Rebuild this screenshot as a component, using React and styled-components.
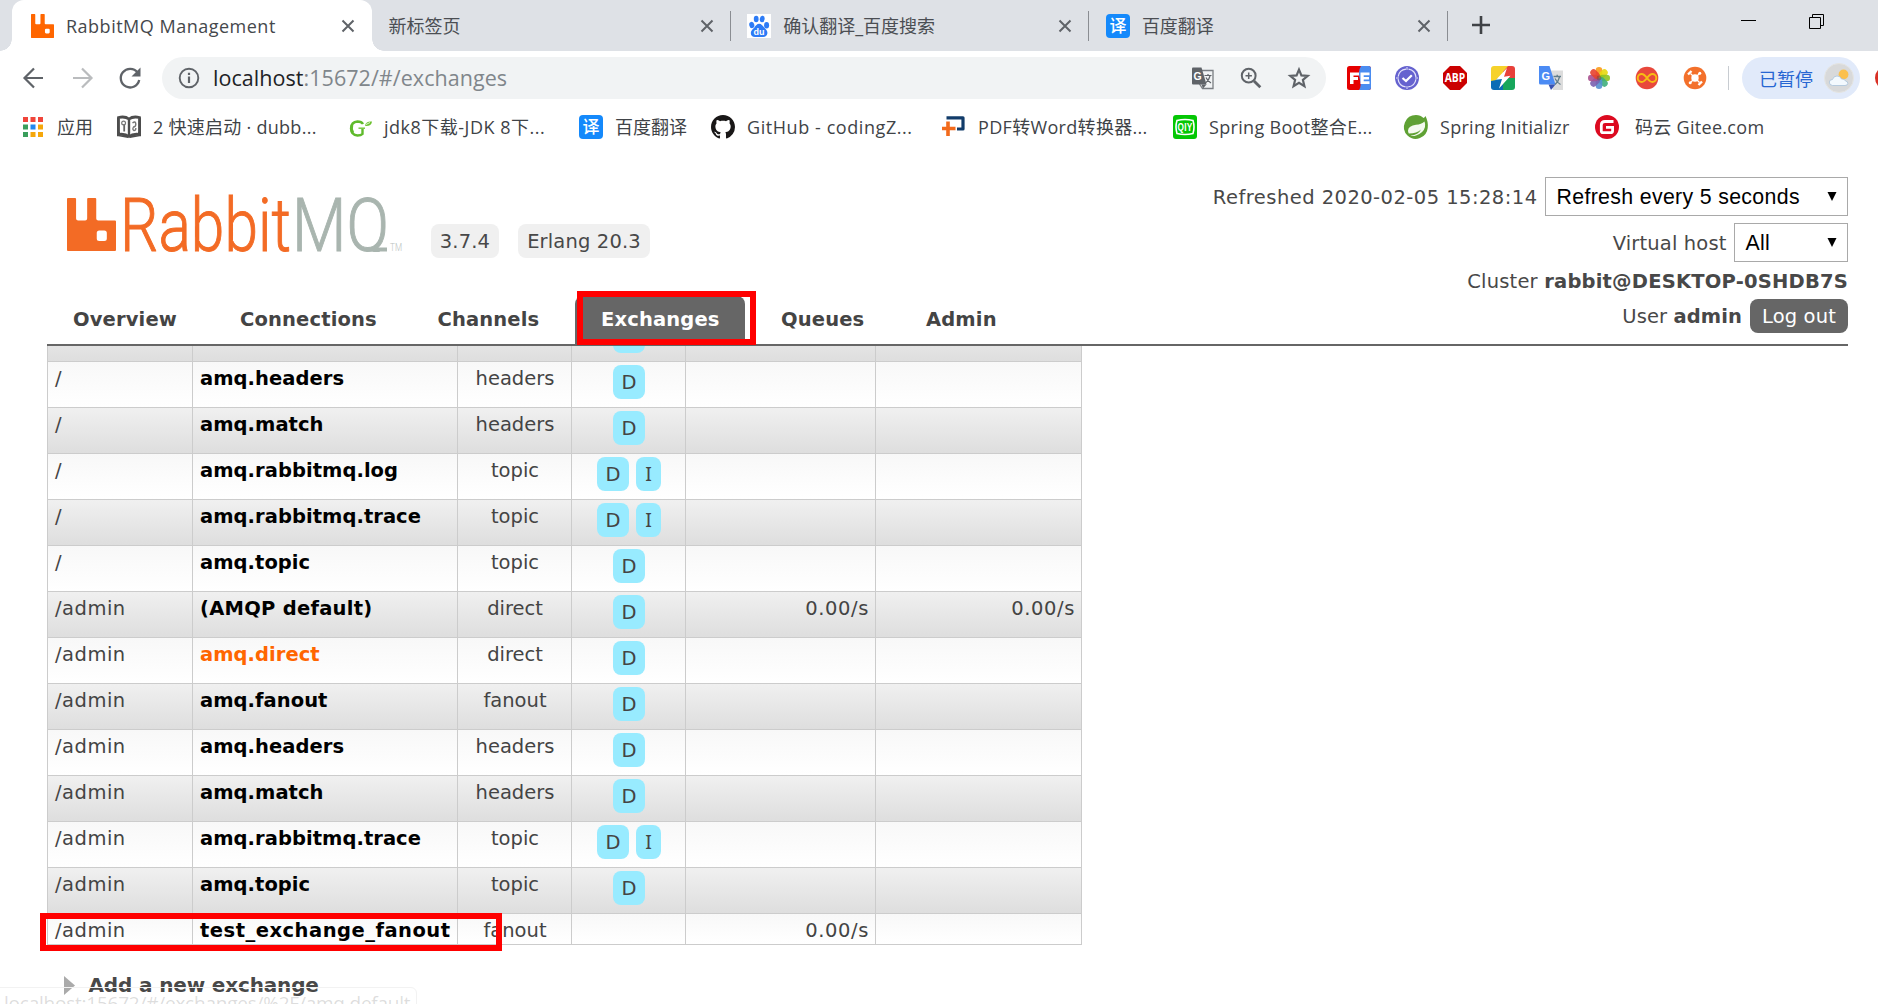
import React from "react";
import styled, { createGlobalStyle } from "styled-components";

const ui = `"Open Sans", "Noto Sans CJK SC", sans-serif`;
const verdana = `"DejaVu Sans", Verdana, sans-serif`;
const arial = `"Liberation Sans", Arial, sans-serif`;

const Global = createGlobalStyle`
  * { box-sizing: border-box; }
  html, body { margin: 0; padding: 0; background: #fff; overflow: hidden; }
  svg { display: block; flex: none; overflow: visible; }
`;

const Window = styled.div`
  position: relative;
  width: 1878px;
  height: 1004px;
  overflow: hidden;
  display: flex;
  flex-direction: column;
  background: #fff;
`;

/* ---------- browser chrome ---------- */

const TabStrip = styled.div`
  height: 51px;
  flex: none;
  display: flex;
  padding-left: 12px;
  background: #dee1e6;
`;

const Tab = styled.div`
  position: relative;
  width: ${(p) => (p.$active ? 360 : 358.7)}px;
  height: 51px;
  display: flex;
  align-items: center;
  padding: 0 17px 0 ${(p) => (p.$active ? 19 : 16.5)}px;
  background: ${(p) => (p.$active ? "#fff" : "transparent")};
  border-radius: ${(p) => (p.$active ? "12px 12px 0 0" : "0")};
  font-family: ${ui};
  color: ${(p) => (p.$active ? "#45484c" : "#4b4e53")};
  ${(p) =>
    p.$active &&
    `
    &::before, &::after {
      content: "";
      position: absolute;
      bottom: 0;
      width: 12px;
      height: 12px;
    }
    &::before { left: -12px; background: radial-gradient(circle at 0 0, transparent 11.5px, #fff 12px); }
    &::after { right: -12px; background: radial-gradient(circle at 100% 0, transparent 11.5px, #fff 12px); }
  `}
`;

const TabTitle = styled.span`
  flex: 1;
  margin-left: ${(p) => (p.$bare ? 0 : 12)}px;
  font-size: 18px;
  line-height: 26px;
  letter-spacing: ${(p) => p.$track || 0}px;
  white-space: nowrap;
`;

const TabDivider = styled.span`
  width: 1px;
  height: 30px;
  margin-top: 11px;
  margin-left: -1px;
  background: #8a8d92;
`;

const NewTab = styled.div`
  display: flex;
  align-items: center;
  margin-left: 24px;
  height: 50px;
`;

const WindowButtons = styled.div`
  margin-left: auto;
  display: flex;
  gap: 53px;
  padding: 14px 54px 0 0;
`;

const Toolbar = styled.div`
  height: 54px;
  flex: none;
  display: flex;
  align-items: center;
  padding-left: 22px;
`;

const NavButtons = styled.div`
  display: flex;
  flex: none;
  gap: 24px;
  width: 140px;
`;

const Omnibox = styled.div`
  width: 1164px;
  height: 42px;
  flex: none;
  border-radius: 21px;
  background: #f1f3f4;
  display: flex;
  align-items: center;
  padding: 0 15px;
  font-family: ${ui};
  font-size: 21.5px;
`;

const Url = styled.span`
  flex: 1;
  margin: -1px 0 0 12px;
  color: #80868b;
  letter-spacing: 0.05px;
  b { font-weight: 400; color: #202124; }
`;

const OmniIcons = styled.div`
  display: flex;
  align-items: center;
  gap: 24px;
`;

const Extensions = styled.div`
  display: flex;
  flex: none;
  gap: 24px;
  margin-left: 21px;
`;

const ToolbarDivider = styled.span`
  width: 1px;
  flex: none;
  height: 24px;
  margin: 0 13px 0 21px;
  background: #c8ccd1;
`;

const Profile = styled.div`
  width: 118px;
  height: 42px;
  flex: none;
  border-radius: 21px;
  background: #e1eafa;
  display: flex;
  align-items: center;
  justify-content: space-between;
  padding: 0 6px 0 17px;
  font-family: ${ui};
  font-size: 18px;
  color: #2766d2;
`;

const UpdateDot = styled.span`
  width: 24px;
  height: 24px;
  flex: none;
  margin-left: 14.5px;
  border-radius: 50%;
  background: #d93025;
`;

const Bookmarks = styled.div`
  height: 45px;
  flex: none;
  display: flex;
  padding-left: 23px;
`;

const Bookmark = styled.div`
  width: ${(p) => p.$w}px;
  flex: none;
  height: 44px;
  display: flex;
  align-items: center;
  gap: ${(p) => p.$gap || 12}px;
  font-family: ${ui};
  font-size: 18px;
  line-height: 26px;
  letter-spacing: ${(p) => p.$track || 0}px;
  color: #404347;
  white-space: nowrap;
`;

/* ---------- RabbitMQ page ---------- */

const Header = styled.header`
  height: 196px;
  flex: none;
  display: flex;
  justify-content: space-between;
  margin: 0 30px 0 47px;
  border-bottom: 2px solid #666;
  font-family: ${verdana};
  font-size: 20px;
  color: #484848;
`;

const HeaderLeft = styled.div`
  display: flex;
  flex-direction: column;
  justify-content: space-between;
`;

const Brand = styled.div`
  display: flex;
  padding: 43px 0 0 20px;
`;

const Version = styled.span`
  height: 34px;
  margin: ${(p) => p.$m};
  width: ${(p) => p.$w}px;
  border-radius: 8px;
  background: #f0f0f0;
  text-align: center;
  line-height: 36px;
  font-size: 19.5px;
  letter-spacing: 0.15px;
`;

const Nav = styled.nav`
  display: flex;
  align-items: flex-end;
`;

const NavItem = styled.a`
  width: ${(p) => p.$w}px;
  height: 48px;
  margin-left: ${(p) => p.$ml || 0}px;
  padding-left: 26px;
  line-height: 47px;
  border-radius: 8px 8px 0 0;
  font-size: 19.5px;
  font-weight: 700;
  letter-spacing: 0.15px;
  background: ${(p) => (p.$active ? "#666" : "transparent")};
  color: ${(p) => (p.$active ? "#fff" : "#444")};
`;

const Status = styled.div`
  display: flex;
  flex-direction: column;
  align-items: flex-end;
  padding-top: 27px;
`;

const StatusRow = styled.div`
  display: flex;
  align-items: center;
  height: ${(p) => p.$h}px;
  margin-bottom: ${(p) => p.$mb || 0}px;
  white-space: pre;
  letter-spacing: ${(p) => p.$track || 0}px;
  font-size: 19.5px;
`;

const Label = styled.span`
  margin-top: 1px;
`;

const Select = styled.div`
  width: ${(p) => p.$w}px;
  height: 39px;
  margin-left: 7.5px;
  padding: 1px 10px 0 10.5px;
  display: flex;
  align-items: center;
  justify-content: space-between;
  border: 1px solid #a9a9a9;
  background: #fff;
  font-family: ${arial};
  font-size: 21.3px;
  letter-spacing: 0.34px;
  color: #000;
`;

const Logout = styled.button`
  width: 98px;
  height: 34px;
  margin-left: 8px;
  padding: 1px 0 0;
  border: 0;
  border-radius: 8px;
  background: #666;
  color: #fff;
  font-family: ${verdana};
  font-size: 19.5px;
  letter-spacing: 0.15px;
`;

const Main = styled.main`
  flex: 1;
  overflow: hidden;
  padding-left: 47px;
  font-family: ${verdana};
  color: #444;
`;

const Table = styled.div`
  width: 1035px;
  margin-top: -30px;
`;

const Row = styled.div`
  display: grid;
  grid-template-columns: 145px 265px 114px 114px 190px 206px;
  height: ${(p) => (p.$short ? 31 : 46)}px;
  background: ${(p) =>
    p.$alt ? "linear-gradient(#f0f0f0, #dedede)" : "linear-gradient(#f8f8f8, #fff)"};
  border-bottom: 1px solid #ccc;
  border-left: 1px solid #ccc;
`;

const Cell = styled.div`
  padding: 5px 6px 0 7px;
  border-right: 1px solid #ccc;
  text-align: ${(p) => p.$align || "left"};
  font-size: 19.5px;
  line-height: 23px;
  letter-spacing: ${(p) => p.$track || 0}px;
  white-space: nowrap;
`;

const Name = styled.a`
  font-weight: 700;
  letter-spacing: ${(p) => p.$track || 0.05}px;
  color: ${(p) => (p.$hot ? "#f60" : "#000")};
`;

const Features = styled.div`
  display: flex;
  justify-content: center;
  gap: 7px;
  margin-top: -2px;
`;

const Feature = styled.span`
  width: ${(p) => (p.$narrow ? 25 : 32)}px;
  height: 34px;
  line-height: ${(p) => (p.$narrow ? 33 : 35)}px;
  border-radius: 8px;
  background: #98ebff;
  text-align: center;
  font-family: ${(p) => (p.$narrow ? `"Noto Sans", sans-serif` : "inherit")};
`;

const Section = styled.h2`
  display: flex;
  align-items: center;
  gap: 14px;
  margin: 25px 0 0 16.5px;
  font-size: 20px;
  line-height: 30px;
  font-weight: 700;
  letter-spacing: -0.15px;
  color: #484848;
`;

const StatusBubble = styled.div`
  position: absolute;
  left: -1px;
  top: 987px;
  width: 418px;
  height: 32px;
  padding-left: 4px;
  border: 1px solid #f2f2f2;
  border-top-right-radius: 6px;
  font-family: ${ui};
  font-size: 19px;
  line-height: 31px;
  letter-spacing: -0.23px;
  color: rgba(120, 120, 120, 0.25);
  white-space: nowrap;
`;

const Highlight = styled.div`
  position: absolute;
  left: ${(p) => p.$x}px;
  top: ${(p) => p.$y}px;
  width: ${(p) => p.$w}px;
  height: ${(p) => p.$h}px;
  border: 6px solid #f00;
`;

/* ---------- drawings ---------- */

const Svg = ({ s = 24, w, h, vb = "0 0 24 24", children, ...rest }) => (
  <svg width={w || s} height={h || s} viewBox={vb} fill="none" {...rest}>{children}</svg>
);

const Rabbit = ({ w, h, color }) => (
  <Svg w={w} h={h} vb="0 0 48.6 53" preserveAspectRatio="none">
    <path fill={color} fillRule="evenodd" d="M1 0H8Q9 0 9 1V20.500Q9 22.500 11 22.500H18Q20 22.500 20 20.500V1Q20 0 21 0H28Q29 0 29 1V20.500Q29 22.500 31 22.500H47.600Q48.600 22.500 48.600 23.500V52Q48.600 53 47.600 53H1Q0 53 0 52V1Q0 0 1 0ZM32 32.500Q29.500 32.500 29.500 35V40.500Q29.500 43 32 43H37Q39.500 43 39.500 40.500V35Q39.500 32.500 37 32.500Z" />
  </Svg>
);

const Close = () => (
  <Svg s={14} vb="0 0 14 14"><path d="M1.500 1.500L12.500 12.500M12.500 1.500L1.500 12.500" stroke="#5f6368" strokeWidth="2" /></Svg>
);

const Yi = () => (
  <Svg>
    <rect width="24" height="24" rx="4" fill="#1489fb" />
    <text x="12" y="18" textAnchor="middle" fontSize="17" fontWeight="500" fill="#fff" fontFamily="Noto Sans CJK SC, sans-serif">译</text>
  </Svg>
);

const Baidu = () => (
  <Svg>
    <rect width="24" height="24" fill="#fff" />
    <g fill="#2c7bf6">
      <ellipse cx="4.800" cy="11" rx="2.500" ry="3.200" transform="rotate(-15 4.800 11)" />
      <ellipse cx="9.200" cy="5" rx="2.400" ry="3.300" />
      <ellipse cx="15.200" cy="5" rx="2.400" ry="3.300" transform="rotate(10 15 5)" />
      <ellipse cx="19.600" cy="11.200" rx="2.500" ry="3.200" />
      <path d="M12.200 9.800c2.300 0 3.500 2 5 3.800 1.800 2 3.400 3.300 3.200 5.600-.2 2.400-2 3.800-4.300 3.800H8c-2.500 0-4.200-1.500-4.200-4s2-3.700 3.600-5.600c1.400-1.700 2.500-3.600 4.800-3.600z" />
    </g>
    <text x="12" y="20.800" fontSize="9" fontWeight="700" textAnchor="middle" fill="#fff" fontFamily="Liberation Sans, sans-serif">du</text>
  </Svg>
);

const Back = ({ color = "#5f6368", flip }) => (
  <Svg s={24} transform={flip ? "scale(-1 1)" : undefined}>
    <path d="M21 12H3M12 2.500L2.500 12L12 21.500" stroke={color} strokeWidth="2.200" />
  </Svg>
);

const Reload = () => (
  <Svg s={24}>
    <path d="M19.500 6.500A9.300 9.300 0 1 0 21.200 14" stroke="#5f6368" strokeWidth="2.300" />
    <path d="M22.500 1.500V10.500H13.500Z" fill="#5f6368" />
  </Svg>
);

const Info = () => (
  <Svg s={24}>
    <circle cx="12" cy="12" r="9.300" stroke="#5f6368" strokeWidth="1.900" />
    <path d="M12 10.500V17M12 6.800V9" stroke="#5f6368" strokeWidth="2.200" />
  </Svg>
);

const TranslateGrey = () => (
  <Svg>
    <path d="M9 4.500H22V22.500H11.500L8.500 18" stroke="#7a7e83" strokeWidth="1.300" />
    <path d="M2 1.500H10.500L15.500 18.500H2Q1 18.500 1 17.500V2.500Q1 1.500 2 1.500Z" fill="#5f6368" />
    <path d="M10.500 18.500L12 22.500L15.500 18.500Z" fill="#5f6368" />
    <text x="2.600" y="13.500" fontSize="10.500" fontWeight="700" fill="#fff" fontFamily="Liberation Sans, sans-serif">G</text>
    <path d="M13.500 9.500H20.500M17 8V9.500M19 10Q18 14.500 14.500 17M15 11.500Q16.500 15 20 17" stroke="#5f6368" strokeWidth="1.200" />
  </Svg>
);

const Zoom = () => (
  <Svg>
    <circle cx="9.700" cy="9.700" r="6.900" stroke="#5f6368" strokeWidth="2" />
    <path d="M15 15L21.300 21.300" stroke="#5f6368" strokeWidth="2.800" />
    <path d="M9.700 6.500V12.900M6.500 9.700H12.900" stroke="#5f6368" strokeWidth="1.500" />
  </Svg>
);

const Star = () => (
  <Svg>
    <path d="M12 3.600L14.400 9.400L20.700 9.900L15.900 14L17.400 20.100L12 16.800L6.600 20.100L8.100 14L3.300 9.900L9.600 9.400Z" stroke="#5f6368" strokeWidth="2.200" />
  </Svg>
);

const FeIcon = () => (
  <Svg>
    <rect width="24" height="24" rx="2.500" fill="#e60000" />
    <path d="M14 0H21.500Q24 0 24 2.500V21.500Q24 24 21.500 24H12Q15 20 12.500 12Q11 5 14 0Z" fill="#4a8cf0" />
    <path d="M3 6.500H12V9.500H6.500V11H11V14H6.500V18H3ZM13.500 6.500H22.500V9.300H16.700V10.900H22V13.600H16.700V15.200H22.500V18H13.500Z" fill="#fff" />
  </Svg>
);

const CheckRing = () => (
  <Svg>
    <circle cx="12" cy="12" r="12" fill="#6562cf" />
    <circle cx="12" cy="12" r="9" stroke="#e3e2fa" strokeWidth="1.200" strokeDasharray="11.500 2.640" strokeDashoffset="-1.300" />
    <path d="M12 1V4M12 20V23M1 12H4M20 12H23" stroke="#e3e2fa" strokeWidth="1" />
    <path d="M7.500 12L11 15L16.800 9.200" stroke="#fff" strokeWidth="2.200" />
  </Svg>
);

const Abp = () => (
  <Svg>
    <path d="M7 0H17L24 7V17L17 24H7L0 17V7Z" fill="#cb0000" />
    <text x="12" y="16.200" fontSize="11.500" fontWeight="700" textAnchor="middle" textLength="20.500" lengthAdjust="spacingAndGlyphs" fill="#fff" fontFamily="Open Sans, sans-serif">ABP</text>
  </Svg>
);

const Bolt = () => (
  <Svg>
    <clipPath id="bolt"><rect width="24" height="24" rx="3" /></clipPath>
    <g clipPath="url(#bolt)">
      <path d="M0 0H12V12H0Z" fill="#f6d22b" />
      <path d="M12 0H24V12H12Z" fill="#e8403a" />
      <path d="M0 12H12V24H0Z" fill="#0c6cb5" />
      <path d="M12 12H24V24H12Z" fill="#17a65b" />
      <path d="M12 0H17L5 14L0 15V12Z" fill="#f6d22b" />
      <path d="M16 2L5 13.800L11 13L8 22.500L19.500 9.800L13 10.800Z" fill="#fff" />
    </g>
  </Svg>
);

const GoogleTranslate = () => (
  <Svg>
    <path d="M8 4.500H24V24H14Z" fill="#dcdcdc" />
    <path d="M0 0H10.500L16.500 18.500H1.500Q0 18.500 0 17Z" fill="#4b8bf4" />
    <path d="M9.500 18.500H16.500L12 24Z" fill="#3a53b0" />
    <text x="2.500" y="13.500" fontSize="11" fontWeight="700" fill="#fff" fontFamily="Liberation Sans, sans-serif">G</text>
    <path d="M14.500 10.500H22M18.200 8.800V10.500M20.500 11Q19.500 15.500 16 18.500M16 12.500Q18 16.500 21.500 18.500" stroke="#607d8b" strokeWidth="1.300" />
  </Svg>
);

const petals = ["#fb9a1a", "#e8d80e", "#8fc31f", "#3fae7c", "#5590d0", "#7a62b0", "#a9508f", "#e8432f"];
const Photos = () => (
  <Svg>
    {petals.map((c, i) => (
      <rect key={c} x="8.700" y="1" width="6.600" height="10.700" rx="3.300" fill={c} opacity="0.900" transform={`rotate(${i * 45} 12 12)`} />
    ))}
    <circle cx="12" cy="12" r="2.400" fill="#7a4a3a" opacity="0.550" />
  </Svg>
);

const Infinity8 = () => (
  <Svg>
    <circle cx="12" cy="12" r="11.300" fill="#e8483c" />
    <path d="M12 12C10 9.300 8.500 8 6.700 8A4 4 0 0 0 6.700 16C8.500 16 10 14.700 12 12C14 9.300 15.500 8 17.300 8A4 4 0 0 1 17.300 16C15.500 16 14 14.700 12 12Z" stroke="#f7bd13" strokeWidth="1.900" />
  </Svg>
);

const Hub = () => (
  <Svg>
    <circle cx="12" cy="12" r="11.300" fill="#f3702b" />
    <circle cx="12" cy="12" r="3.700" fill="#fff" />
    <path d="M7.500 7.500L16.500 16.500M16.500 7.500L7.500 16.500" stroke="#fff" strokeWidth="1.300" />
    <path d="M5 8.500L8.500 5M15.500 19L19 15.500" stroke="#fff" strokeWidth="2.300" />
    <circle cx="16.800" cy="7.200" r="1.500" fill="#fff" />
    <circle cx="7.200" cy="16.800" r="1.500" fill="#fff" />
  </Svg>
);

const Avatar = () => (
  <Svg s={30} vb="0 0 30 30">
    <circle cx="15" cy="15" r="14.500" fill="#d8d9da" stroke="#e5e5e2" />
    <circle cx="19.500" cy="11.500" r="4.900" fill="#fbc04e" />
    <path d="M8.500 22.500Q5 22 5.300 19Q5.700 16.500 8.500 16.500Q9.500 13 13 13Q16.500 13 17.500 16Q20.500 15.500 21.500 18Q24 18.500 23.800 20.500Q23.500 22.500 21 22.500Z" fill="#f3f9fe" stroke="#a9c3da" strokeWidth="0.800" />
  </Svg>
);

const appColors = ["#f0453a", "#f0453a", "#f0453a", "#3a9e5c", "#2188f0", "#f5a70b", "#3a9e5c", "#f5a70b", "#f5a70b"];
const Apps = () => (
  <Svg s={20} vb="0 0 20 20">
    {appColors.map((c, i) => (
      <rect key={i} x={(i % 3) * 7.5} y={Math.floor(i / 3) * 7.5} width="5" height="5" fill={c} />
    ))}
  </Svg>
);

const Book = () => (
  <Svg>
    <path d="M0 3L1.500 2.500V20L11 21V23L0 21ZM24 3L22.500 2.500V20L13 21V23L24 21Z" fill="#4d4d4d" />
    <path d="M1.500 2.500Q8 1 12 4Q16 1 22.500 2.500V19.500Q16 18.500 12 21.500Q8 18.500 1.500 19.500Z" fill="#fff" stroke="#4d4d4d" strokeWidth="2.800" />
    <path d="M12 4V22" stroke="#4d4d4d" strokeWidth="2.400" />
    <path d="M7.200 9V16.500" stroke="#666" strokeWidth="1.800" />
    <circle cx="6.600" cy="8" r="1.900" stroke="#777" strokeWidth="1.200" />
    <path d="M15.500 8Q18.500 5.500 18.800 9Q18.800 12 16.500 12Q15 14.500 17 15.500Q19 15.500 18.800 13" stroke="#777" strokeWidth="1.400" />
  </Svg>
);

const Leafy = () => (
  <Svg>
    <path d="M15 9Q13.500 6.500 9.500 6.500Q3.200 7 3 13.500Q3.200 20 9.500 20.500Q13 20.500 14.500 19V13.500" stroke="#5fba2c" strokeWidth="2.400" />
    <path d="M4 10Q2.800 14 5 18" stroke="#5fba2c" strokeWidth="2.600" />
    <path d="M10.500 13.200H17" stroke="#7ac943" strokeWidth="1.500" />
    <path d="M17 10.500Q18 6 24 6.500Q23.500 11 18 11Z" fill="#6cc12f" />
    <path d="M18 9.500L22 7.500" stroke="#fff" strokeWidth="0.800" />
  </Svg>
);

const Github = () => (
  <Svg vb="0 0 16 16">
    <path fill="#191717" d="M8 0C3.580 0 0 3.580 0 8c0 3.540 2.290 6.530 5.470 7.590.4.070.55-.17.55-.38 0-.19-.01-.82-.01-1.490-2.010.37-2.530-.49-2.690-.94-.09-.23-.48-.94-.82-1.130-.28-.15-.68-.52-.01-.53.63-.01 1.080.58 1.230.82.72 1.210 1.870.87 2.330.66.070-.52.28-.87.51-1.070-1.780-.2-3.640-.89-3.640-3.950 0-.87.31-1.590.82-2.150-.08-.2-.36-1.020.08-2.120 0 0 .67-.21 2.200.82.64-.18 1.320-.27 2-.27s1.360.09 2 .27c1.530-1.040 2.200-.82 2.200-.82.44 1.100.16 1.920.08 2.120.51.56.82 1.270.82 2.150 0 3.070-1.870 3.750-3.650 3.950.29.25.54.73.54 1.480 0 1.070-.01 1.930-.01 2.200 0 .21.15.46.55.38A8.010 8.010 0 0 0 16 8c0-4.420-3.580-8-8-8z" />
  </Svg>
);

const PdfIcon = () => (
  <Svg>
    <path d="M4.500 2.800H21V14H15" stroke="#123c6a" strokeWidth="3.200" strokeLinejoin="round" />
    <path d="M6 6.500V21M0 13.500H13.500" stroke="#f26a1b" strokeWidth="3.600" />
  </Svg>
);

const Qiy = () => (
  <Svg>
    <rect width="24" height="24" rx="3" fill="#04c704" />
    <path d="M4 5.500Q12 3.500 20 5.500Q22 12 20 18.500Q12 20.500 4 18.500Q2 12 4 5.500Z" stroke="#fff" strokeWidth="1.600" />
    <text x="12" y="16" fontSize="10.500" fontWeight="700" textAnchor="middle" textLength="15" lengthAdjust="spacingAndGlyphs" fill="#fff" fontFamily="Liberation Sans, sans-serif">QIY</text>
  </Svg>
);

const SpringIcon = () => (
  <Svg>
    <path d="M21.500 1Q24.500 7 23.700 13A12 12 0 0 1 3.500 20.500A12 12 0 0 1 12 0Q16.500 0 19.500 3Q20.800 2.300 21.500 1Z" fill="#5fa134" />
    <path d="M20.500 6.500Q17.500 9.500 12 9.800Q4.500 10.800 4 15.500Q4 17 4.800 18.500Q13 18.300 17 14.500Q14.500 19.800 6.500 20.800Q9 21.500 12 20.500Q19.500 18 21 12Q21.500 9 20.500 6.500Z" fill="#f4faef" />
  </Svg>
);

const Gitee = () => (
  <Svg>
    <circle cx="12" cy="12" r="12" fill="#dc0a20" />
    <path d="M18.500 6.500H10Q6.300 6.500 6.300 10V16Q6.300 17.700 8 17.700H15.500Q17.600 17.700 17.600 15.700V12.300H11" stroke="#fff" strokeWidth="2.800" />
  </Svg>
);

const Wordmark = () => (
  <Svg w={288} h={60} vb="0 0 288 60">
    <clipPath id="baseline"><rect x="0" y="0" width="288" height="59" /></clipPath>
    <g fontFamily="Roboto, Open Sans, sans-serif" fontWeight="300" clipPath="url(#baseline)">
      <text x="4" y="58" fontSize="74.500" textLength="171" lengthAdjust="spacingAndGlyphs" fill="#f36b25" stroke="#f36b25" strokeWidth="1">Rabbit</text>
      <text x="176" y="58" fontSize="74.500" textLength="97" lengthAdjust="spacingAndGlyphs" fill="#a9b5af" stroke="#a9b5af" strokeWidth="1">MQ</text>
      <path d="M250 56.500H271" stroke="#a9b5af" strokeWidth="4" />
      <text x="274" y="58" fontSize="11" textLength="12" lengthAdjust="spacingAndGlyphs" fill="#b9c1bd">TM</text>
    </g>
  </Svg>
);

const Arrow = () => (
  <Svg s={10} vb="0 0 10 10"><path d="M0.500 0H9.500L5 9Z" fill="#000" /></Svg>
);

/* ---------- data ---------- */

const rows = [
  { vhost: "/", name: "amq.fanout", type: "fanout", features: "D" },
  { vhost: "/", name: "amq.headers", type: "headers", features: "D" },
  { vhost: "/", name: "amq.match", type: "headers", features: "D" },
  { vhost: "/", name: "amq.rabbitmq.log", type: "topic", features: "DI" },
  { vhost: "/", name: "amq.rabbitmq.trace", type: "topic", features: "DI" },
  { vhost: "/", name: "amq.topic", type: "topic", features: "D" },
  { vhost: "/admin", name: "(AMQP default)", type: "direct", features: "D", rateIn: "0.00/s", rateOut: "0.00/s", track: 0.27 },
  { vhost: "/admin", name: "amq.direct", type: "direct", features: "D", hot: true },
  { vhost: "/admin", name: "amq.fanout", type: "fanout", features: "D" },
  { vhost: "/admin", name: "amq.headers", type: "headers", features: "D" },
  { vhost: "/admin", name: "amq.match", type: "headers", features: "D" },
  { vhost: "/admin", name: "amq.rabbitmq.trace", type: "topic", features: "DI" },
  { vhost: "/admin", name: "amq.topic", type: "topic", features: "D" },
  { vhost: "/admin", name: "test_exchange_fanout", type: "fanout", features: "", rateIn: "0.00/s", track: 0.5 },
];

const extensions = [FeIcon, CheckRing, Abp, Bolt, GoogleTranslate, Photos, Infinity8, Hub];

const bookmarks = [
  { icon: Apps, text: "应用", w: 94, gap: 14 },
  { icon: Book, text: "2 快速启动 · dubb...", w: 231, track: 0.27 },
  { icon: Leafy, text: "jdk8下载-JDK 8下...", w: 231, track: 0.5 },
  { icon: Yi, text: "百度翻译", w: 132 },
  { icon: Github, text: "GitHub - codingZ...", w: 231, track: 0.57 },
  { icon: PdfIcon, text: "PDF转Word转换器...", w: 231, track: 0.32 },
  { icon: Qiy, text: "Spring Boot整合E...", w: 231, track: 0.32 },
  { icon: SpringIcon, text: "Spring Initializr", w: 191, track: 0.29 },
  { icon: Gitee, text: "码云 Gitee.com", w: 200, gap: 16, track: 0.3 },
];

export default function App() {
  return (
    <Window>
      <Global />
      <TabStrip>
        <Tab $active>
          <Rabbit w={23} h={24} color="#ff6600" />
          <TabTitle $track={0.5}>RabbitMQ Management</TabTitle>
          <Close />
        </Tab>
        <Tab>
          <TabTitle $bare>新标签页</TabTitle>
          <Close />
        </Tab>
        <TabDivider />
        <Tab>
          <Baidu />
          <TabTitle>确认翻译_百度搜索</TabTitle>
          <Close />
        </Tab>
        <TabDivider />
        <Tab>
          <Yi />
          <TabTitle>百度翻译</TabTitle>
          <Close />
        </Tab>
        <TabDivider />
        <NewTab>
          <Svg s={18} vb="0 0 18 18"><path d="M9 0V18M0 9H18" stroke="#3f4246" strokeWidth="2.600" /></Svg>
        </NewTab>
        <WindowButtons>
          <Svg w={15} h={15} vb="0 0 15 15"><path d="M0 6.500H15" stroke="#000" /></Svg>
          <Svg w={15} h={15} vb="0 0 15 15">
            <path d="M0.500 3.500H11.500V14.500H0.500ZM3.500 3V0.500H14.500V11.500H12" stroke="#000" />
          </Svg>
        </WindowButtons>
      </TabStrip>

      <Toolbar>
        <NavButtons>
          <Back />
          <Back flip color="#babcbe" />
          <Reload />
        </NavButtons>
        <Omnibox>
          <Info />
          <Url><b>localhost</b>:15672/#/exchanges</Url>
          <OmniIcons>
            <TranslateGrey />
            <Zoom />
            <Star />
          </OmniIcons>
        </Omnibox>
        <Extensions>
          {extensions.map((Icon, i) => <Icon key={i} />)}
        </Extensions>
        <ToolbarDivider />
        <Profile>
          已暂停
          <Avatar />
        </Profile>
        <UpdateDot />
      </Toolbar>

      <Bookmarks>
        {bookmarks.map(({ icon: Icon, text, w, gap, track }) => (
          <Bookmark key={text} $w={w} $gap={gap} $track={track}>
            <Icon />
            <span>{text}</span>
          </Bookmark>
        ))}
      </Bookmarks>

      <Header>
        <HeaderLeft>
          <Brand>
            <Svg w={49} h={59} vb="0 0 49 59">
              <g transform="translate(0 5)"><Rabbit w={49} h={53} color="#f36b25" /></g>
            </Svg>
            <Wordmark />
            <Version $m="31px 0 0 27px" $w={68}>3.7.4</Version>
            <Version $m="31px 0 0 19px" $w={132}>Erlang 20.3</Version>
          </Brand>
          <Nav>
            <NavItem $w={167}>Overview</NavItem>
            <NavItem $w={197.5}>Connections</NavItem>
            <NavItem $w={163.5}>Channels</NavItem>
            <NavItem $active $w={170}>Exchanges</NavItem>
            <NavItem $w={135} $ml={10}>Queues</NavItem>
            <NavItem $w={120} $ml={10}>Admin</NavItem>
          </Nav>
        </HeaderLeft>
        <Status>
          <StatusRow $h={39} $mb={7} $track={0.46}>
            <Label>Refreshed 2020-02-05 15:28:14</Label>
            <Select $w={303}>Refresh every 5 seconds<Arrow /></Select>
          </StatusRow>
          <StatusRow $h={39} $mb={4} $track={0.15}>
            <Label>Virtual host</Label>
            <Select $w={114}>All<Arrow /></Select>
          </StatusRow>
          <StatusRow $h={30} $mb={3} $track={0.2}>Cluster <b>rabbit@DESKTOP-0SHDB7S</b></StatusRow>
          <StatusRow $h={34} $track={0.1}>
            <Label>User <b>admin</b></Label>
            <Logout>Log out</Logout>
          </StatusRow>
        </Status>
      </Header>

      <Main>
        <Table>
          {rows.map((r, i) => (
            <Row key={i} $alt={i % 2 === 0} $short={!r.features}>
              <Cell $track={0.5}>{r.vhost}</Cell>
              <Cell><Name $hot={r.hot} $track={r.track}>{r.name}</Name></Cell>
              <Cell $align="center">{r.type}</Cell>
              <Cell>
                <Features>
                  {r.features.split("").map((f) => (
                    <Feature key={f} $narrow={f === "I"}>{f}</Feature>
                  ))}
                </Features>
              </Cell>
              <Cell $align="right" $track={0.6}>{r.rateIn}</Cell>
              <Cell $align="right" $track={0.6}>{r.rateOut}</Cell>
            </Row>
          ))}
        </Table>
        <Section>
          <Svg w={11} h={19} vb="0 0 11 19"><path d="M0 0L11 9.500L0 19Z" fill="#aaa" /></Svg>
          Add a new exchange
        </Section>
      </Main>

      <StatusBubble>localhost:15672/#/exchanges/%2F/amq.default</StatusBubble>
      <Highlight $x={577} $y={291} $w={179} $h={54} />
      <Highlight $x={40} $y={913} $w={462} $h={38} />
    </Window>
  );
}
